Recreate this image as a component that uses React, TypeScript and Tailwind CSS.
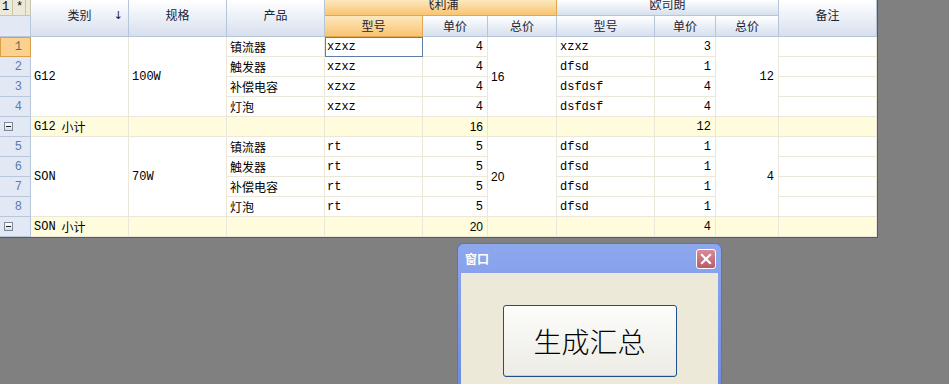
import * as React from 'react';

const CN = "font-['Noto_Sans_CJK_SC','Noto_Sans',sans-serif]";
const MONO = "font-['Liberation_Mono','Noto_Sans_CJK_SC',monospace]";

interface Group {
  name: string;
  spec: string;
  items: { product: string; m1: string; p1: string; m2: string; p2: string }[];
  total1: string;
  total2: string;
  start: number;
}

const groups: Group[] = [
  {
    name: 'G12',
    spec: '100W',
    total1: '16',
    total2: '12',
    start: 1,
    items: [
      { product: '镇流器', m1: 'xzxz', p1: '4', m2: 'xzxz', p2: '3' },
      { product: '触发器', m1: 'xzxz', p1: '4', m2: 'dfsd', p2: '1' },
      { product: '补偿电容', m1: 'xzxz', p1: '4', m2: 'dsfdsf', p2: '4' },
      { product: '灯泡', m1: 'xzxz', p1: '4', m2: 'dsfdsf', p2: '4' },
    ],
  },
  {
    name: 'SON',
    spec: '70W',
    total1: '20',
    total2: '4',
    start: 5,
    items: [
      { product: '镇流器', m1: 'rt', p1: '5', m2: 'dfsd', p2: '1' },
      { product: '触发器', m1: 'rt', p1: '5', m2: 'dfsd', p2: '1' },
      { product: '补偿电容', m1: 'rt', p1: '5', m2: 'dfsd', p2: '1' },
      { product: '灯泡', m1: 'rt', p1: '5', m2: 'dfsd', p2: '1' },
    ],
  },
];

const hdr = `bg-gradient-to-b from-white to-[#d7e0ee] border-r border-b border-[#b6c5da] text-[12px] text-[#1b2433] ${CN} overflow-hidden flex justify-center`;
const orange = `bg-gradient-to-b from-[#fde8bd] to-[#f8c470] border-r border-b border-[#e3a74e] text-[12px] text-[#1b2433] ${CN} overflow-hidden flex justify-center`;
const cell = 'border-r border-b border-[#ebe8da] bg-white text-[12px] text-black flex items-center overflow-hidden leading-[14px]';
const sub = 'border-r border-b border-[#ebe8da] bg-[#fffbdd] text-[12px] text-black flex items-center overflow-hidden leading-[14px]';
const rowHead = `border-r border-b border-[#b8c7dc] bg-[#e2e9f4] text-[12px] text-[#5b7bb0] flex items-center justify-end pr-[8px] ${MONO}`;

function MinusBox() {
  return (
    <span className="w-[9px] h-[9px] border border-[#7d8899] bg-gradient-to-b from-white to-[#d9dde4] flex items-center justify-center">
      <span className="w-[5px] h-px bg-[#222]" />
    </span>
  );
}

function GroupRows({ g }: { g: Group }) {
  return (
    <>
      {g.items.map((it, i) => {
        const n = g.start + i;
        const selected = n === 1;
        return (
          <React.Fragment key={n}>
            <div
              className={
                selected
                  ? `border border-[#d9a048] bg-[#fcd08e] text-[12px] text-[#6a6a6a] flex items-center justify-end pr-[8px] ${MONO}`
                  : rowHead
              }
            >
              {n}
            </div>
            {i === 0 && (
              <div className={`${cell} row-span-4 pl-[3px] ${MONO} text-[11px]`}>{g.name}</div>
            )}
            {i === 0 && (
              <div className={`${cell} row-span-4 pl-[3px] ${MONO} text-[11px]`}>{g.spec}</div>
            )}
            <div className={`${cell} pl-[3px] ${CN}`}>{it.product}</div>
            <div
              className={`${cell} pl-[2px] ${MONO} text-[10.5px] ${
                selected ? 'outline outline-1 -outline-offset-1 outline-[#5d7ca8]' : ''
              }`}
            >
              {it.m1}
            </div>
            <div className={`${cell} justify-end pr-[4px] ${MONO}`}>{it.p1}</div>
            {i === 0 && (
              <div className={`${cell} row-span-4 pl-[3px] font-['Liberation_Sans',sans-serif]`}>
                {g.total1}
              </div>
            )}
            <div className={`${cell} pl-[3px] ${MONO} text-[10.5px]`}>{it.m2}</div>
            <div className={`${cell} justify-end pr-[4px] ${MONO}`}>{it.p2}</div>
            {i === 0 && (
              <div className={`${cell} row-span-4 justify-end pr-[4px] ${MONO}`}>{g.total2}</div>
            )}
            <div className={cell} />
          </React.Fragment>
        );
      })}
      <div className={`${rowHead} !justify-start pl-[4px]`}>
        <MinusBox />
      </div>
      <div className={`${sub} pl-[3px] ${MONO} text-[11px]`}>
        {g.name}
        <span className={`${CN} text-[12px] ml-[6px]`}>小计</span>
      </div>
      <div className={sub} />
      <div className={sub} />
      <div className={sub} />
      <div className={`${sub} justify-end pr-[4px] font-['Liberation_Sans',sans-serif]`}>{g.total1}</div>
      <div className={sub} />
      <div className={sub} />
      <div className={`${sub} justify-end pr-[4px] ${MONO}`}>{g.total2}</div>
      <div className={sub} />
      <div className={sub} />
    </>
  );
}

export default function App() {
  return (
    <div className="relative w-[949px] h-[384px] overflow-hidden bg-[#808080]">
      <div className="w-[878px] border-r border-b border-[#5a5a5a] bg-white">
        <div className="grid grid-cols-[31px_98px_98px_98px_98px_65px_69px_98px_61px_63px_98px] grid-rows-[16px_21px_repeat(10,20px)]">
          {/* header row 1 */}
          <div className="bg-[#ece9d8] border-r border-b border-[#c9c5b0] flex text-[12px] text-black font-['Liberation_Mono',monospace] leading-[14px]">
            <span className="w-[13px] border-r border-[#c9c5b0] pl-[2px]">1</span>
            <span className="w-[13px] border-r border-[#c9c5b0] pl-[3px]">*</span>
          </div>
          <div className={`${hdr} row-span-2 pt-[8px] relative`}>
            <span className="leading-[14px]">类别</span>
            <span className="absolute right-[5px] top-[9px] text-[11px] leading-[14px] font-['DejaVu_Sans',sans-serif]">↓</span>
          </div>
          <div className={`${hdr} row-span-2 pt-[8px]`}>
            <span className="leading-[14px]">规格</span>
          </div>
          <div className={`${hdr} row-span-2 pt-[8px]`}>
            <span className="leading-[14px]">产品</span>
          </div>
          <div className={`${orange} col-span-3`}>
            <span className="leading-[14px] -mt-[3px]">飞利浦</span>
          </div>
          <div className={`${hdr} col-span-3`}>
            <span className="leading-[14px] -mt-[3px]">欧司朗</span>
          </div>
          <div className={`${hdr} row-span-2 pt-[8px]`}>
            <span className="leading-[14px]">备注</span>
          </div>
          {/* header row 2 */}
          <div className="bg-[#e2e9f4] border-r border-b border-[#b8c7dc]" />
          <div className={`${orange} items-center`}>型号</div>
          <div className={`${hdr} items-center`}>单价</div>
          <div className={`${hdr} items-center`}>总价</div>
          <div className={`${hdr} items-center`}>型号</div>
          <div className={`${hdr} items-center`}>单价</div>
          <div className={`${hdr} items-center`}>总价</div>

          {groups.map((g) => (
            <GroupRows key={g.name} g={g} />
          ))}
        </div>
      </div>

      {/* window dialog */}
      <div className="absolute left-[457px] top-[243px] w-[265px] h-[160px] rounded-t-[7px] bg-gradient-to-b from-[#8ea8ee] to-[#6a89de] border border-[#5574d2] px-[3px] flex flex-col">
        <div className="h-[29px] flex items-center justify-between pl-[4px] pr-[2px]">
          <span className={`${CN} text-[12px] text-white font-bold`}>窗口</span>
          <div className="w-[20px] h-[20px] rounded-[3px] border border-white bg-gradient-to-b from-[#d88b97] to-[#b85c6c] flex items-center justify-center">
            <svg width="12" height="12" viewBox="0 0 12 12">
              <path d="M2 2 L10 10 M10 2 L2 10" stroke="white" strokeWidth="2.2" strokeLinecap="square" />
            </svg>
          </div>
        </div>
        <div className="flex-1 bg-[#ece9d8] flex justify-center pt-[32px]">
          <button className="w-[174px] h-[72px] rounded-[3px] border border-[#1f4f8f] bg-gradient-to-b from-[#fdfdfc] to-[#ecebe4] shadow-[inset_0_-1px_0_#d6d0c0]">
            <span className={`${CN} text-[28px] font-light text-black`}>生成汇总</span>
          </button>
        </div>
      </div>
    </div>
  );
}
